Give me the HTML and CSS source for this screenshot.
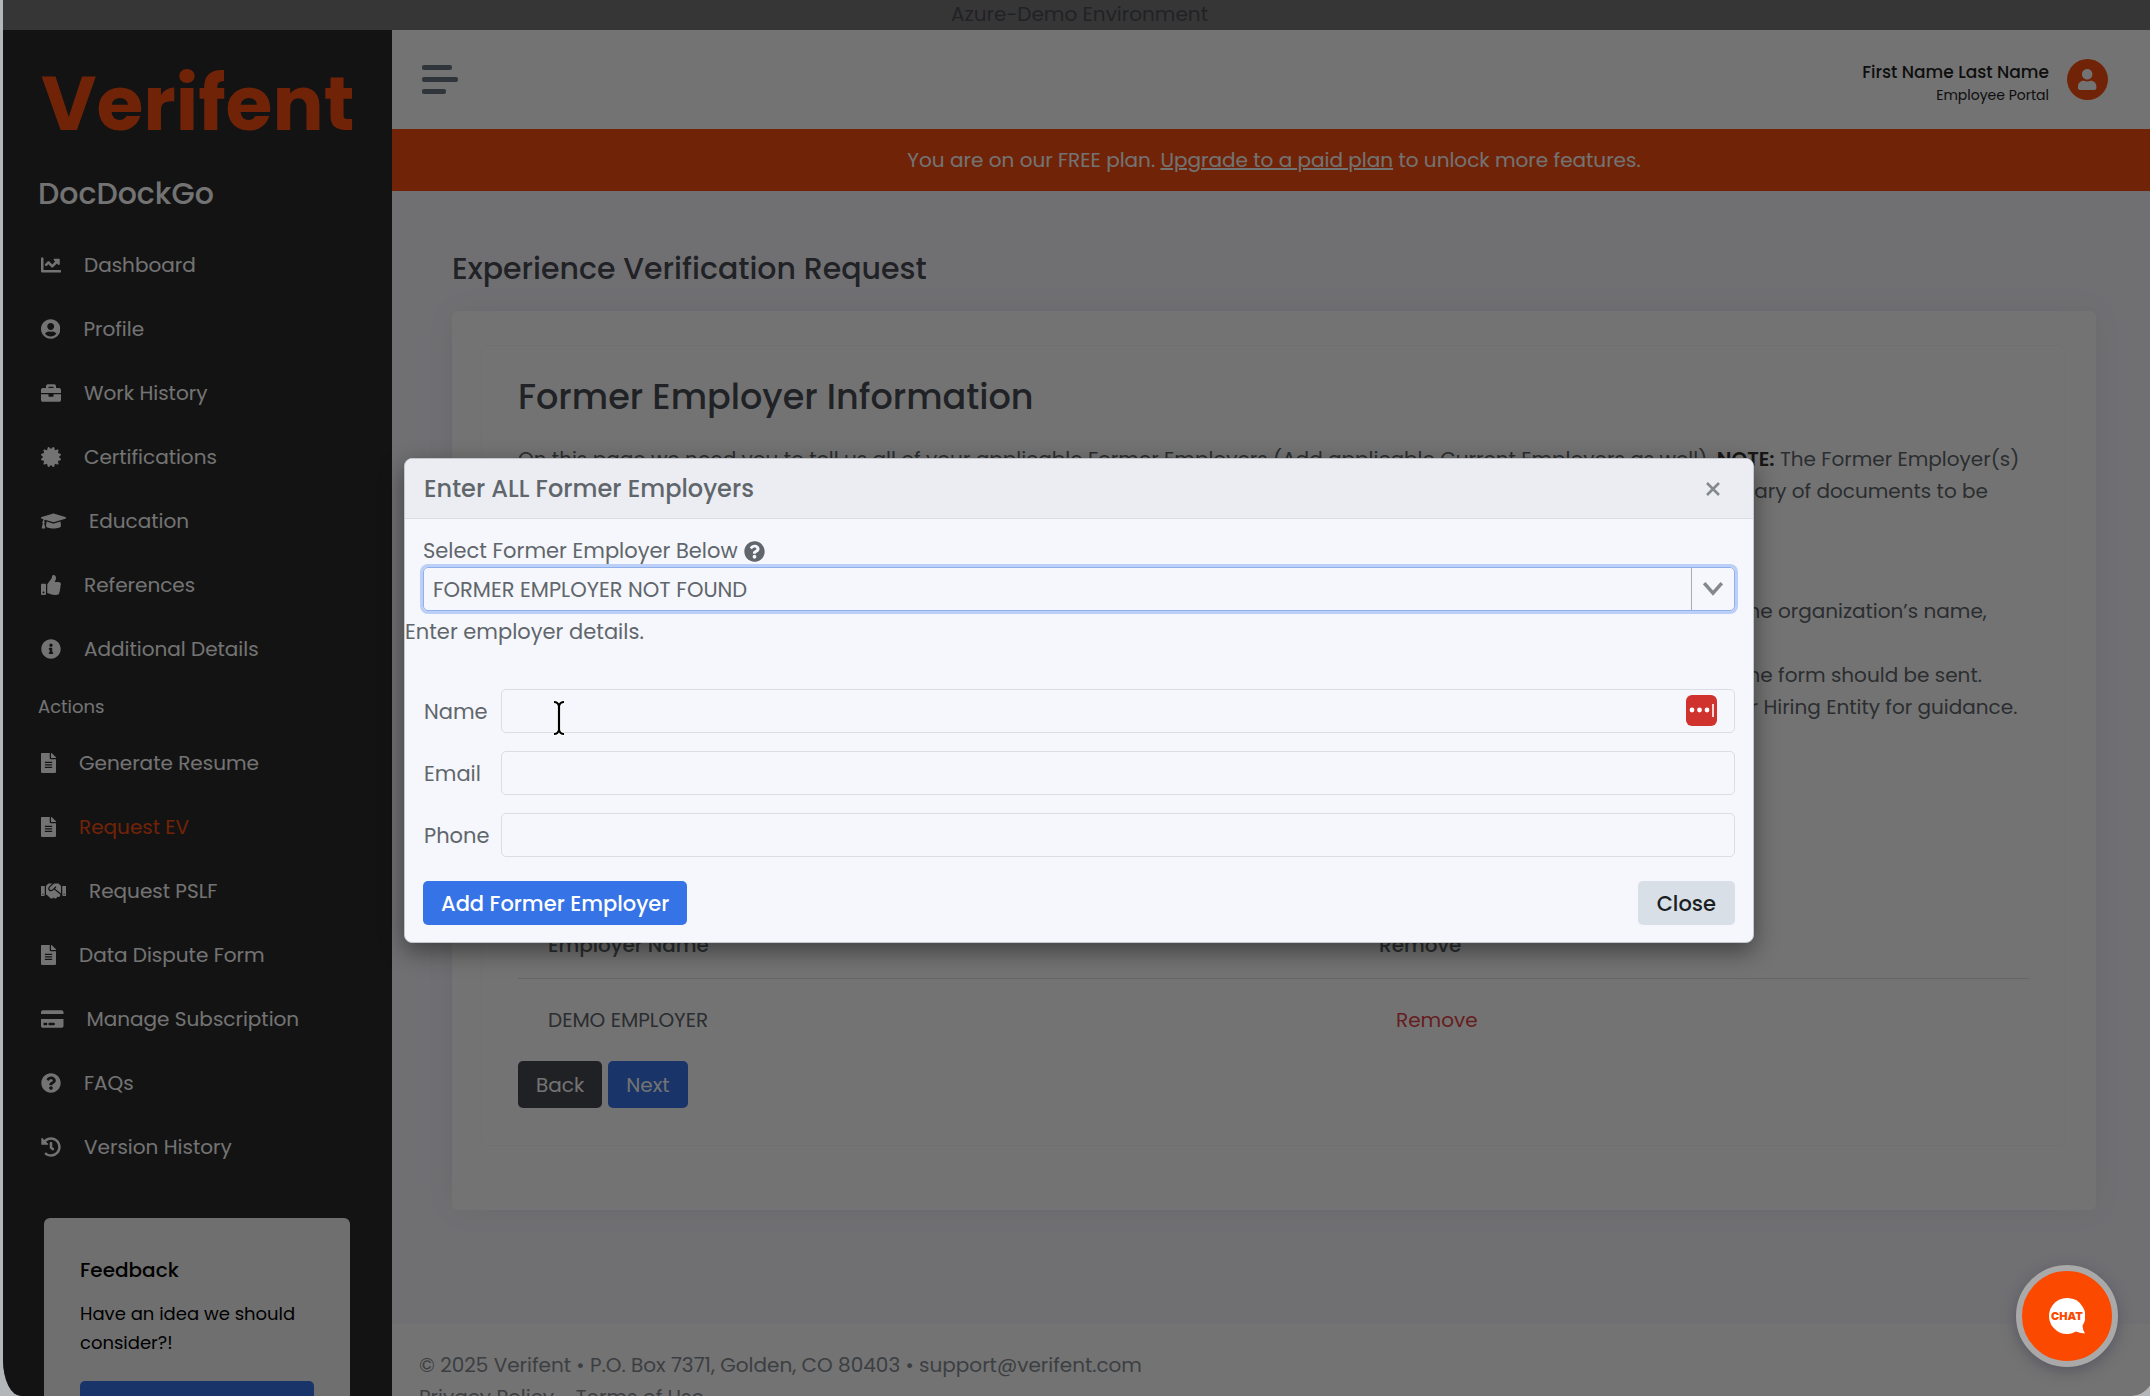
FILE: index.html
```html
<!DOCTYPE html>
<html lang="en">
<head>
    <meta charset="UTF-8">
    <meta name="viewport" content="width=device-width, initial-scale=1.0">
    <title>Experience Verification Request</title>
    <link rel="stylesheet" href="styles.css">
</head>
<body>
    <!-- shared icons -->
    <svg class="sprite" aria-hidden="true">
        <symbol id="i-file" viewBox="0 0 384 512"><path d="M224 136V0H24C10.7 0 0 10.7 0 24v464c0 13.3 10.7 24 24 24h336c13.3 0 24-10.7 24-24V160H248c-13.2 0-24-10.8-24-24zm64 236c0 6.6-5.4 12-12 12H108c-6.6 0-12-5.4-12-12v-8c0-6.6 5.4-12 12-12h168c6.6 0 12 5.4 12 12v8zm0-64c0 6.6-5.4 12-12 12H108c-6.6 0-12-5.4-12-12v-8c0-6.6 5.4-12 12-12h168c6.6 0 12 5.4 12 12v8zm0-72v8c0 6.6-5.4 12-12 12H108c-6.6 0-12-5.4-12-12v-8c0-6.6 5.4-12 12-12h168c6.6 0 12 5.4 12 12zm96-114.1v6.1H256V0h6.1c6.4 0 12.5 2.5 17 7l97.9 98c4.5 4.5 7 10.6 7 16.9z"/></symbol>
        <symbol id="i-question" viewBox="0 0 512 512"><path d="M504 256c0 136.997-111.043 248-248 248S8 392.997 8 256C8 119.083 119.043 8 256 8s248 111.083 248 248zM262.655 90c-54.497 0-89.255 22.957-116.549 63.758-3.536 5.286-2.353 12.415 2.715 16.258l34.699 26.31c5.205 3.947 12.621 3.008 16.665-2.122 17.864-22.658 30.113-35.797 57.303-35.797 20.429 0 45.698 13.148 45.698 32.958 0 14.976-12.363 22.667-32.534 33.976C247.128 238.528 216 254.941 216 296v4c0 6.627 5.373 12 12 12h56c6.627 0 12-5.373 12-12v-1.333c0-28.462 83.186-29.647 83.186-106.667 0-58.002-60.165-102-116.531-102zM256 338c-25.365 0-46 20.635-46 46 0 25.364 20.635 46 46 46s46-20.636 46-46c0-25.365-20.635-46-46-46z"/></symbol>
    </svg>

    <div class="frame">
        <div class="env-bar">Azure-Demo Environment</div>

        <div class="layout">
            <aside class="sidebar">
                <a href="#" class="logo">Verifent</a>
                <div class="product">DocDockGo</div>

                <nav class="menu">
                    <a href="#" class="menu-item">
                        <svg class="icon" viewBox="0 0 512 512"><path d="M496 384H64V80c0-8.84-7.16-16-16-16H16C7.16 64 0 71.16 0 80v336c0 17.67 14.33 32 32 32h464c8.84 0 16-7.16 16-16v-32c0-8.84-7.16-16-16-16zM464 96H345.94c-21.38 0-32.09 25.85-16.97 40.97l32.4 32.4L288 242.75l-73.37-73.37c-12.5-12.5-32.76-12.5-45.25 0l-68.69 68.69c-6.25 6.25-6.25 16.38 0 22.63l22.62 22.62c6.25 6.25 16.38 6.25 22.63 0L192 237.25l73.37 73.37c12.5 12.5 32.76 12.5 45.25 0l96-96 32.4 32.4c15.12 15.12 40.97 4.41 40.97-16.97V112c.01-8.84-7.15-16-15.99-16z"/></svg>
                        Dashboard
                    </a>
                    <a href="#" class="menu-item">
                        <svg class="icon" viewBox="0 0 496 512"><path d="M248 8C111 8 0 119 0 256s111 248 248 248 248-111 248-248S385 8 248 8zm0 96c48.6 0 88 39.4 88 88s-39.4 88-88 88-88-39.4-88-88 39.4-88 88-88zm0 344c-58.7 0-111.3-26.6-146.5-68.2 18.8-35.4 55.6-59.8 98.5-59.8 2.4 0 4.8.4 7.1 1.1 13 4.2 26.6 6.9 40.9 6.9 14.3 0 28-2.7 40.9-6.9 2.3-.7 4.7-1.1 7.1-1.1 42.9 0 79.7 24.4 98.5 59.8C359.3 421.4 306.7 448 248 448z"/></svg>
                        Profile
                    </a>
                    <a href="#" class="menu-item">
                        <svg class="icon" viewBox="0 0 512 512"><path d="M320 336c0 8.84-7.16 16-16 16h-96c-8.84 0-16-7.16-16-16v-48H0v144c0 25.6 22.4 48 48 48h416c25.6 0 48-22.4 48-48V288H320v48zm144-208h-80V80c0-25.6-22.4-48-48-48H176c-25.6 0-48 22.4-48 48v48H48c-25.6 0-48 22.4-48 48v80h512v-80c0-25.6-22.4-48-48-48zm-144 0H192V96h128v32z"/></svg>
                        Work History
                    </a>
                    <a href="#" class="menu-item">
                        <svg class="icon" viewBox="0 0 512 512"><path d="M458.622 255.92l45.985-45.005c13.708-12.977 7.316-36.039-10.664-40.339l-62.65-15.99 17.661-62.015c4.991-17.838-11.829-34.663-29.661-29.671l-61.994 17.667-15.984-62.671C337.085.197 313.765-6.276 300.99 7.228L256 53.57 211.011 7.229c-12.63-13.351-36.047-7.234-40.325 10.668l-15.984 62.671-61.995-17.667C74.87 57.907 58.056 74.738 63.046 92.572l17.661 62.015-62.65 15.99C.069 174.878-6.31 197.944 7.392 210.915l45.985 45.005-45.985 45.004c-13.708 12.977-7.316 36.039 10.664 40.339l62.65 15.99-17.661 62.015c-4.991 17.838 11.829 34.663 29.661 29.671l61.994-17.667 15.984 62.671c4.439 18.575 27.696 24.018 40.325 10.668L256 458.61l44.989 46.001c12.5 13.488 35.987 7.486 40.325-10.668l15.984-62.671 61.994 17.667c17.836 4.994 34.651-11.837 29.661-29.671l-17.661-62.015 62.65-15.99c17.987-4.302 24.366-27.367 10.664-40.339l-45.984-45.004z"/></svg>
                        Certifications
                    </a>
                    <a href="#" class="menu-item">
                        <svg class="icon" viewBox="0 0 640 512"><path d="M622.34 153.2L343.4 67.5c-15.2-4.67-31.6-4.67-46.79 0L17.66 153.2c-23.54 7.23-23.54 38.36 0 45.59l48.63 14.94c-10.67 13.19-17.23 29.28-17.88 46.9C38.78 266.15 32 276.11 32 288c0 10.78 5.68 19.85 13.86 25.65L20.33 428.53C18.11 438.52 25.71 448 35.94 448h56.11c10.24 0 17.84-9.48 15.62-19.47L82.14 313.65C90.32 307.85 96 298.78 96 288c0-11.57-6.47-21.25-15.66-26.87.76-15.02 8.44-28.3 20.69-36.72L296.6 284.5c9.06 2.78 26.44 6.25 46.79 0l278.95-85.7c23.55-7.24 23.55-38.36 0-45.6zM352.79 315.09c-28.53 8.76-52.84 3.92-65.59 0l-145.02-44.55L128 384c0 35.35 85.96 64 192 64s192-28.65 192-64l-14.18-113.47-145.03 44.56z"/></svg>
                        Education
                    </a>
                    <a href="#" class="menu-item">
                        <svg class="icon" viewBox="0 0 512 512"><path d="M104 224H24c-13.255 0-24 10.745-24 24v240c0 13.255 10.745 24 24 24h80c13.255 0 24-10.745 24-24V248c0-13.255-10.745-24-24-24zM64 472c-13.255 0-24-10.745-24-24s10.745-24 24-24 24 10.745 24 24-10.745 24-24 24zM384 81.452c0 42.416-25.97 66.208-33.277 94.548h101.723c33.397 0 59.397 27.746 59.553 58.098.084 17.938-7.546 37.249-19.439 49.197l-.11.11c9.836 23.337 8.237 56.037-9.308 79.469 8.681 25.895-.069 57.704-16.382 74.757 4.298 17.598 2.244 32.575-6.148 44.632C440.202 511.587 389.616 512 346.839 512l-2.845-.001c-48.287-.017-87.806-17.598-119.56-31.725-15.957-7.099-36.821-15.887-52.651-16.178-6.54-.12-11.783-5.457-11.783-11.998v-213.77c0-3.2 1.282-6.271 3.558-8.521 39.614-39.144 56.648-80.587 89.117-113.111 14.804-14.832 20.188-37.236 25.393-58.902C282.515 39.293 291.817 0 312 0c24 0 72 8 72 81.452z"/></svg>
                        References
                    </a>
                    <a href="#" class="menu-item">
                        <svg class="icon" viewBox="0 0 512 512"><path d="M256 8C119.043 8 8 119.083 8 256c0 136.997 111.043 248 248 248s248-111.003 248-248C504 119.083 392.957 8 256 8zm0 110c23.196 0 42 18.804 42 42s-18.804 42-42 42-42-18.804-42-42 18.804-42 42-42zm56 254c0 6.627-5.373 12-12 12h-88c-6.627 0-12-5.373-12-12v-24c0-6.627 5.373-12 12-12h12v-64h-12c-6.627 0-12-5.373-12-12v-24c0-6.627 5.373-12 12-12h64c6.627 0 12 5.373 12 12v100h12c6.627 0 12 5.373 12 12v24z"/></svg>
                        Additional Details
                    </a>
                </nav>

                <div class="menu-title">Actions</div>

                <nav class="menu">
                    <a href="#" class="menu-item"><svg class="icon" viewBox="0 0 384 512"><use href="#i-file"/></svg>Generate Resume</a>
                    <a href="#" class="menu-item active"><svg class="icon" viewBox="0 0 384 512"><use href="#i-file"/></svg>Request EV</a>
                    <a href="#" class="menu-item">
                        <svg class="icon" viewBox="0 0 640 512"><path d="M434.7 64h-85.9c-8 0-15.7 3-21.6 8.4l-98.3 90c-.1.1-.2.3-.3.4-16.6 15.6-16.3 40.5-2.1 56 12.7 13.9 39.4 17.6 56.1 2.7.1-.1.3-.1.4-.2l79.9-73.2c6.5-5.9 16.7-5.5 22.6 1 6 6.5 5.5 16.6-1 22.6l-26.1 23.9L504 313.8c2.9 2.4 5.5 5 7.9 7.7V128l-54.6-54.6c-5.9-6-14.1-9.4-22.6-9.4zM544 128.2v223.9c0 17.7 14.3 32 32 32h64V128.2h-96zm48 223.9c-8.8 0-16-7.2-16-16s7.2-16 16-16 16 7.2 16 16-7.2 16-16 16zM0 384h64c17.7 0 32-14.3 32-32V128.2H0V384zm48-63.9c8.8 0 16 7.2 16 16s-7.2 16-16 16-16-7.2-16-16c0-8.9 7.2-16 16-16zm435.9 18.6L334.6 217.5l-30 27.5c-29.7 27.1-75.2 24.5-101.7-4.4-26.9-29.4-24.8-74.9 4.4-101.7L289.1 64h-83.8c-8.5 0-16.6 3.4-22.6 9.4L128 128v223.9h18.3l90.5 81.9c27.4 22.3 67.7 18.1 90-9.3l.2-.2 17.9 15.5c15.9 13 39.4 10.5 52.3-5.4l31.4-38.6 5.4 4.4c13.7 11.1 33.9 9.1 45-4.7l9.5-11.7c11.2-13.8 9.1-33.9-4.6-45.1z"/></svg>
                        Request PSLF
                    </a>
                    <a href="#" class="menu-item"><svg class="icon" viewBox="0 0 384 512"><use href="#i-file"/></svg>Data Dispute Form</a>
                    <a href="#" class="menu-item">
                        <svg class="icon" viewBox="0 0 576 512"><path d="M0 432c0 26.5 21.5 48 48 48h480c26.5 0 48-21.5 48-48V256H0v176zm192-68c0-6.6 5.4-12 12-12h136c6.6 0 12 5.4 12 12v40c0 6.6-5.4 12-12 12H204c-6.6 0-12-5.4-12-12v-40zm-128 0c0-6.6 5.4-12 12-12h72c6.6 0 12 5.4 12 12v40c0 6.6-5.4 12-12 12H76c-6.6 0-12-5.4-12-12v-40zM576 80v48H0V80c0-26.5 21.5-48 48-48h480c26.5 0 48 21.5 48 48z"/></svg>
                        Manage Subscription
                    </a>
                    <a href="#" class="menu-item"><svg class="icon" viewBox="0 0 512 512"><use href="#i-question"/></svg>FAQs</a>
                    <a href="#" class="menu-item">
                        <svg class="icon" viewBox="0 0 512 512"><path d="M504 255.531c.253 136.64-111.18 248.372-247.82 248.468-59.015.042-113.223-20.53-155.822-54.911-11.077-8.94-11.905-25.541-1.839-35.607l11.267-11.267c8.609-8.609 22.353-9.551 31.891-1.984C173.062 425.135 212.781 440 256 440c101.705 0 184-82.311 184-184 0-101.705-82.311-184-184-184-48.814 0-93.149 18.969-126.068 49.932l50.754 50.754c10.08 10.08 2.941 27.314-11.313 27.314H24c-8.837 0-16-7.163-16-16V38.627c0-14.254 17.234-21.393 27.314-11.314l49.372 49.372C129.209 34.136 189.552 8 256 8c136.81 0 247.747 110.78 248 247.531zm-180.912 78.784l9.823-12.63c8.138-10.463 6.253-25.542-4.21-33.679L288 256.349V152c0-13.255-10.745-24-24-24h-16c-13.255 0-24 10.745-24 24v135.651l65.409 50.874c10.463 8.137 25.541 6.253 33.679-4.21z"/></svg>
                        Version History
                    </a>
                </nav>

                <div class="feedback">
                    <div class="feedback-title">Feedback</div>
                    <p class="feedback-text">Have an idea we should consider?!</p>
                    <button type="button" class="feedback-button" aria-label="Send feedback"></button>
                </div>
            </aside>

            <main class="main">
                <header class="header">
                    <button type="button" class="burger" aria-label="Toggle menu"><span></span><span></span><span></span></button>
                    <div class="user">
                        <div class="user-info">
                            <div class="user-name">First Name Last Name</div>
                            <div class="user-role">Employee Portal</div>
                        </div>
                        <div class="avatar">
                            <svg viewBox="0 0 448 512"><path d="M224 256c70.7 0 128-57.3 128-128S294.7 0 224 0 96 57.3 96 128s57.3 128 128 128zm89.6 32h-16.7c-22.2 10.2-46.9 16-72.9 16s-50.6-5.8-72.9-16h-16.7C60.2 288 0 348.2 0 422.4V464c0 26.5 21.5 48 48 48h352c26.5 0 48-21.5 48-48v-41.6c0-74.2-60.2-134.4-134.4-134.4z"/></svg>
                        </div>
                    </div>
                </header>

                <div class="plan-banner">
                    <p>You are on our FREE plan. <a href="#">Upgrade to a paid plan</a> to unlock more features.</p>
                </div>

                <div class="content">
                    <h1 class="page-title">Experience Verification Request</h1>
                    <section class="card">
                        <div class="card-inner">
                            <h2 class="section-title">Former Employer Information</h2>
                            <p class="intro">
                                On this page we need you to tell us all of your applicable Former Employers (Add applicable Current Employers as well). <strong>NOTE:</strong> The Former Employer(s)<br>
                                selected will receive your Experience Verification form directly. After you select every employer, we will show you a full summary of documents to be
                            </p>
                            <p class="intro steps">
                                If your Former Employer is not listed, please select FORMER EMPLOYER NOT FOUND from the list of employers and then put in the organization’s name,<br>
                                email address and phone number.<br>
                                Please double check the email address of the Human Resource contact at the employer, since this is the address to which the form should be sent.<br>
                                If you are not sure which of your employers apply to this request, or who should be contacted there, please reach out to your Hiring Entity for guidance.
                            </p>

                            <table class="employers">
                                <thead>
                                    <tr><th>Employer Name</th><th>Remove</th></tr>
                                </thead>
                                <tbody>
                                    <tr><td>DEMO EMPLOYER</td><td><button type="button" class="remove">Remove</button></td></tr>
                                </tbody>
                            </table>

                            <div class="steps-nav">
                                <button type="button" class="btn btn-dark">Back</button>
                                <button type="button" class="btn btn-primary">Next</button>
                            </div>
                        </div>
                    </section>
                </div>

                <footer class="footer">
                    <div>© 2025 Verifent • P.O. Box 7371, Golden, CO 80403 • support@verifent.com</div>
                    <div><a href="#">Privacy Policy</a> - <a href="#">Terms of Use</a></div>
                </footer>
            </main>
        </div>

        <div class="backdrop">
            <form class="modal" role="dialog" aria-labelledby="modal-title">
                <div class="modal-header">
                    <h3 class="modal-title" id="modal-title">Enter ALL Former Employers</h3>
                    <button type="button" class="modal-close" aria-label="Close dialog">
                        <svg viewBox="0 0 16 16"><path d="M2 2l12 12M14 2L2 14"/></svg>
                    </button>
                </div>
                <div class="modal-body">
                    <label class="select-label" for="employer">Select Former Employer Below
                        <svg viewBox="0 0 512 512"><use href="#i-question"/></svg>
                    </label>
                    <div class="select-box">
                        <select id="employer">
                            <option>FORMER EMPLOYER NOT FOUND</option>
                        </select>
                        <span class="select-arrow">
                            <svg viewBox="0 0 20 14"><path d="M2 2l8 9 8-9"/></svg>
                        </span>
                    </div>
                </div>
                <p class="details-hint">Enter employer details.</p>
                <div class="modal-fields">
                    <div class="field">
                        <label for="name">Name</label>
                        <div class="field-box">
                            <input type="text" id="name">
                            <svg class="pass-badge" viewBox="0 0 31 31"><rect width="31" height="31" rx="6"/><circle cx="6" cy="15" r="2.4"/><circle cx="13.5" cy="15" r="2.4"/><circle cx="21" cy="15" r="2.4"/><path d="M27 9v13"/></svg>
                            <svg class="text-cursor" viewBox="0 0 14 36"><path class="halo" d="M2 2q4 0 5 4q1-4 5-4M2 34q4 0 5-4q1 4 5 4M7 6v24"/><path d="M2 2q4 0 5 4q1-4 5-4M2 34q4 0 5-4q1 4 5 4M7 6v24"/></svg>
                        </div>
                    </div>
                    <div class="field">
                        <label for="email">Email</label>
                        <div class="field-box"><input type="email" id="email"></div>
                    </div>
                    <div class="field">
                        <label for="phone">Phone</label>
                        <div class="field-box"><input type="tel" id="phone"></div>
                    </div>
                </div>
                <div class="modal-footer">
                    <button type="button" class="btn btn-primary">Add Former Employer</button>
                    <button type="button" class="btn btn-light">Close</button>
                </div>
            </form>
        </div>

        <button type="button" class="chat-button">
            <svg class="chat-bubble" viewBox="0 0 36 36"><path d="M18 0a18 18 0 1 0 9 33.600q3 1.400 9 2q-2.500-4-2.500-8A18 18 0 0 0 18 0z"/></svg>
            <span class="chat-text">CHAT</span>
        </button>
    </div>
</body>
</html>
```

FILE: styles.css
```css
:root {
    --orange: #fa4e10;
    --blue: #3573e6;
    --text: #60666b;
    --dark-text: #494c54;
    --panel: #f5f7fc;
    --line: #dadde3;
}

* {
    box-sizing: border-box;
}

body {
    margin: 0;
    padding-left: 3px;
    overflow: hidden;
    background: #b4b7b9;
    font-family: Poppins, Inter, "Open Sans", sans-serif;
    font-size: 20px;
    color: var(--text);
}

h1, h2, h3, p {
    margin: 0;
    font-weight: 500;
}

p {
    font-weight: 400;
}

a {
    color: inherit;
    text-decoration: none;
}

button, input, select {
    font: inherit;
    color: inherit;
}

button {
    padding: 0;
    border: 0;
    background: none;
    cursor: pointer;
}

.sprite {
    display: none;
}

.frame {
    position: relative;
    display: flex;
    flex-direction: column;
    height: 100vh;
    margin-right: -6px;
    overflow: hidden;
    border-radius: 0 0 24px 18px / 0 0 30px 36px;
}

.env-bar {
    height: 30px;
    line-height: 28px;
    text-align: center;
    background: #787878;
    color: var(--dark-text);
}

.layout {
    flex: 1;
    display: flex;
    min-height: 0;
}

/* sidebar */
.sidebar {
    flex: none;
    width: 389px;
    overflow: hidden;
    background: #2a2a2c;
    color: #fff;
}

.logo {
    display: block;
    height: 125px;
    padding: 24px 0 0 38px;
    font-size: 76px;
    line-height: 100px;
    font-weight: 700;
    color: var(--orange);
}

.product {
    padding-left: 35px;
    font-size: 30px;
    line-height: 78px;
    font-weight: 500;
}

.menu-item {
    display: flex;
    align-items: center;
    gap: 23px;
    height: 64px;
    padding-left: 38px;
}

.menu-item.active {
    color: var(--orange);
}

.icon {
    flex: none;
    height: 20px;
    fill: #fff;
}

.menu-title {
    padding: 2px 0 0 35px;
    font-size: 18px;
    line-height: 48px;
}

.feedback {
    display: flex;
    flex-direction: column;
    height: 260px;
    margin: 39px 42px 0 41px;
    padding: 37px 36px;
    border-radius: 6px;
    background: #f7f7f7;
    color: #000;
}

.feedback-title {
    line-height: 30px;
    font-weight: 500;
}

.feedback-text {
    margin-top: 14px;
    font-size: 18px;
    line-height: 29px;
}

.feedback-button {
    height: 46px;
    margin-top: 24px;
    border-radius: 5px;
    background: var(--blue);
}

/* page */
.main {
    flex: 1;
    display: flex;
    flex-direction: column;
    min-width: 0;
    background: #f9f9ff;
}

.header {
    flex: none;
    display: flex;
    align-items: center;
    justify-content: space-between;
    height: 99px;
    padding: 0 48px 0 30px;
    background: #fff;
}

.burger {
    display: flex;
    flex-direction: column;
    gap: 7px;
}

.burger span {
    width: 30px;
    height: 5px;
    border-radius: 2px;
    background: #687680;
}

.burger span:nth-child(2) {
    width: 36px;
}

.burger span:nth-child(3) {
    width: 24px;
}

.user {
    display: flex;
    align-items: center;
    gap: 18px;
    text-align: right;
    color: #222;
}

.user-info {
    padding-top: 7px;
}

.user-name {
    font-size: 17px;
    line-height: 24px;
    font-weight: 500;
}

.user-role {
    font-size: 14px;
    line-height: 22px;
}

.avatar {
    display: flex;
    align-items: center;
    justify-content: center;
    width: 41px;
    height: 41px;
    border-radius: 50%;
    background: var(--orange);
}

.avatar svg {
    height: 21px;
    fill: #fff;
}

.plan-banner {
    flex: none;
    height: 62px;
    line-height: 62px;
    text-align: center;
    background: var(--orange);
    color: #fff;
}

.plan-banner a {
    text-decoration: underline;
}

.content {
    flex: none;
    padding: 58px 60px 0;
}

.page-title {
    font-size: 30px;
    line-height: 40px;
    color: var(--dark-text);
}

.card {
    margin-top: 22px;
    padding: 34px 30px 64px 29px;
    border-radius: 6px;
    background: #fff;
    box-shadow: 0 0 32px rgba(80, 80, 110, 0.1);
}

.card-inner {
    padding: 29px 36px 37px;
    border: 1px solid #f9f9f9;
    border-radius: 8px;
}

.section-title {
    font-size: 35px;
    line-height: 44px;
    color: var(--dark-text);
}

.intro {
    margin-top: 24px;
    line-height: 32px;
    white-space: nowrap;
}

.intro strong {
    font-weight: 600;
    color: #333;
}

.intro.steps {
    margin-top: 88px;
}

.employers {
    width: 100%;
    margin-top: 189px;
    border-collapse: collapse;
    table-layout: fixed;
}

.employers th,
.employers td {
    padding: 0 30px;
    text-align: left;
}

.employers th:first-child {
    width: 55%;
}

.employers th {
    height: 66px;
    font-weight: 500;
    border-bottom: 1px solid #dfdfe1;
}

.employers td {
    height: 83px;
}

.remove {
    padding: 0 17px;
    color: #e04448;
}

.steps-nav {
    display: flex;
    gap: 6px;
}

.btn {
    height: 44px;
    padding: 0 18px;
    border-radius: 5px;
    font-weight: 500;
}

.steps-nav .btn {
    height: 47px;
    font-weight: 400;
}

.btn-primary {
    background: var(--blue);
    color: #fff;
}

.btn-dark {
    background: #474952;
    color: #fff;
}

.btn-light {
    padding: 0 19px;
    background: #d9dfe7;
    color: #1a1f24;
}

.footer {
    flex: 1;
    margin-top: 114px;
    padding: 25px 27px 0;
    background: #fff;
    color: #868c93;
    line-height: 32px;
}

/* dialog */
.backdrop {
    position: absolute;
    inset: 0;
    display: flex;
    align-items: center;
    justify-content: center;
    padding: 5px 1px 0 0;
    background: rgba(0, 0, 0, 0.55);
}

.modal {
    width: 90%;
    max-width: 1350px;
    border: 1px solid #c3c6cb;
    border-radius: 8px;
    overflow: hidden;
    background: var(--panel);
    font-size: 21px;
    box-shadow: 0 8px 24px rgba(0, 0, 0, 0.45);
}

.modal-header {
    display: flex;
    align-items: center;
    justify-content: space-between;
    height: 60px;
    padding: 0 32px 0 19px;
    border-bottom: 1px solid var(--line);
    background: #ebedf2;
}

.modal-title {
    font-size: 24px;
}

.modal-close svg {
    display: block;
    width: 16px;
    stroke: #84898e;
    stroke-width: 2.6;
}

.modal-body {
    padding: 17px 18px 0;
}

.select-label {
    display: flex;
    align-items: center;
    gap: 6px;
    line-height: 30px;
}

.select-label svg {
    width: 21px;
    fill: var(--text);
}

.select-box {
    display: flex;
    height: 44px;
    margin-top: 1px;
    border: 1px solid #8fb0ec;
    border-radius: 5px;
    box-shadow: 0 0 0 3px #bccff6;
}

.select-box select {
    flex: 1;
    padding: 0 9px;
    border: 0;
    outline: 0;
    appearance: none;
    background: transparent;
}

.select-arrow {
    display: flex;
    align-items: center;
    justify-content: center;
    width: 43px;
    border-left: 1px solid #a9adb3;
    pointer-events: none;
}

.select-arrow svg {
    width: 22px;
    fill: none;
    stroke: #84898e;
    stroke-width: 3.2;
}

.details-hint {
    margin-top: 6px;
    line-height: 30px;
}

.modal-fields {
    display: flex;
    flex-direction: column;
    gap: 18px;
    padding: 42px 18px 0 19px;
}

.field {
    display: flex;
    align-items: center;
}

.field label {
    width: 77px;
}

.field-box {
    position: relative;
    flex: 1;
}

.field-box input {
    display: block;
    width: 100%;
    height: 44px;
    padding: 0 12px;
    border: 1px solid var(--line);
    border-radius: 5px;
    background: transparent;
}

.pass-badge {
    position: absolute;
    top: 6px;
    right: 18px;
    width: 31px;
    fill: #fff;
    stroke: none;
}

.pass-badge rect {
    fill: #d0322d;
}

.pass-badge path {
    stroke: #fff;
    stroke-width: 1.6;
}

.text-cursor {
    position: absolute;
    top: 11px;
    left: 51px;
    width: 14px;
    fill: none;
    stroke: #000;
    stroke-width: 2.2;
}

.text-cursor .halo {
    stroke: #fff;
    stroke-width: 4;
}

.modal-footer {
    display: flex;
    justify-content: space-between;
    padding: 24px 18px 17px;
}

.chat-button {
    position: absolute;
    right: 38px;
    bottom: 29px;
    display: grid;
    place-items: center;
    width: 102px;
    height: 102px;
    border: 6px solid #a9a9a9;
    border-radius: 50%;
    background: #fc4900;
    box-shadow: 0 4px 14px rgba(60, 60, 80, 0.5);
}

.chat-bubble {
    grid-area: 1 / 1;
    width: 36px;
    fill: #fff;
}

.chat-text {
    grid-area: 1 / 1;
    font-family: Inter, sans-serif;
    font-size: 11px;
    font-weight: 900;
    color: #fc4900;
}
```
